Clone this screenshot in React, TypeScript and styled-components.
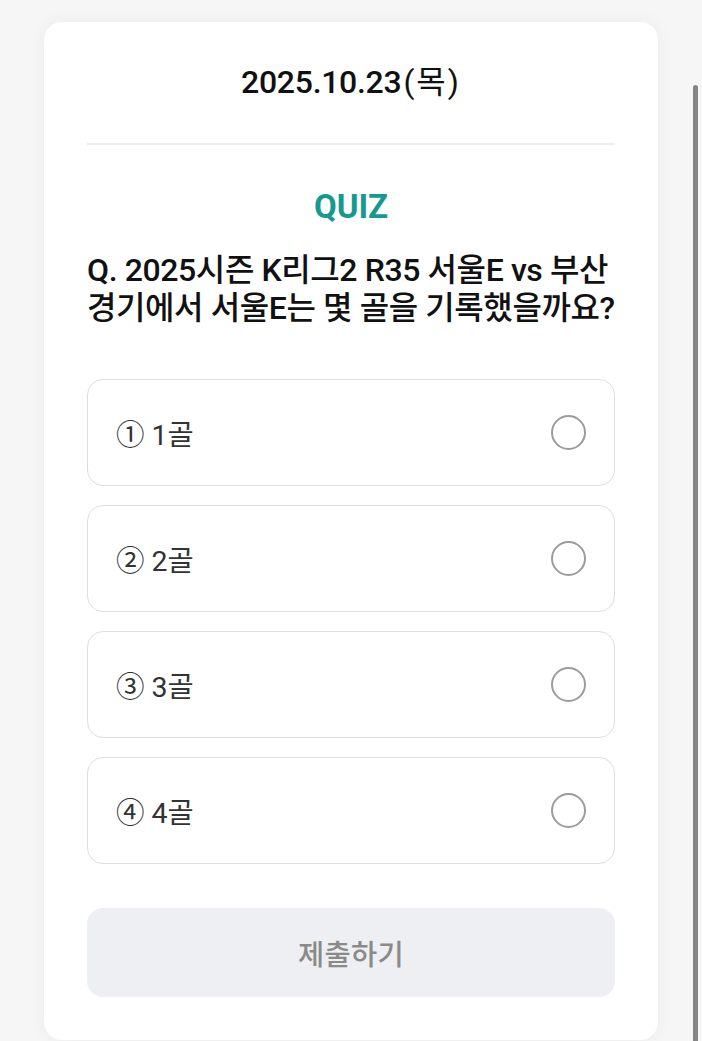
import React, { useState } from "react";
import styled, { createGlobalStyle } from "styled-components";

const Global = createGlobalStyle`
  html, body { margin: 0; padding: 0; background: #f6f6f6; }
  body { font-family: Roboto, "Noto Sans CJK KR", sans-serif; -webkit-font-smoothing: antialiased; }
  * { box-sizing: border-box; }
`;

const Page = styled.div`
  padding: 22px 44px 0;
  min-height: 1041px;
`;

const Card = styled.div`
  background: #ffffff;
  border-radius: 18px;
  box-shadow: 0 0 18px rgba(0, 0, 0, 0.05);
  padding: 44px 43px 43px;
  display: flex;
  flex-direction: column;
`;

const DateTitle = styled.div`
  text-align: center;
  font-size: 32px;
  line-height: 32px;
  font-weight: 500;
  color: #111;
  letter-spacing: -0.3px;
`;

const Paren = styled.span`
  font-weight: 400;
  margin-left: 2px;
  letter-spacing: 2px;
`;

const Divider = styled.hr`
  border: none;
  height: 2px;
  background: #ececec;
  margin: 45px 0 0;
`;

const QuizLabel = styled.div`
  margin-top: 44px;
  text-align: center;
  font-size: 33px;
  line-height: 36px;
  font-weight: 700;
  color: #169a8f;
`;

const Question = styled.div`
  margin-top: 26px;
  font-size: 32px;
  line-height: 38px;
  font-weight: 500;
  color: #111;
  letter-spacing: -0.4px;
`;

const Options = styled.div`
  margin-top: 52px;
  display: flex;
  flex-direction: column;
  gap: 19px;
`;

const Option = styled.button<{ $selected: boolean }>`
  height: 107px;
  display: flex;
  align-items: center;
  justify-content: space-between;
  padding: 0 28px 0 28px;
  background: #fff;
  border: 1.5px solid ${(p) => (p.$selected ? "#169a8f" : "#dedede")};
  border-radius: 16px;
  font-family: inherit;
  font-size: 28.5px;
  color: #333;
  cursor: pointer;
  text-align: left;
`;

const Radio = styled.span<{ $selected: boolean }>`
  width: 35px;
  height: 35px;
  border-radius: 50%;
  border: 2px solid ${(p) => (p.$selected ? "#169a8f" : "#9c9c9c")};
  display: flex;
  align-items: center;
  justify-content: center;
  &::after {
    content: "";
    width: 17px;
    height: 17px;
    border-radius: 50%;
    background: ${(p) => (p.$selected ? "#169a8f" : "transparent")};
  }
`;

const Submit = styled.button<{ $active: boolean }>`
  margin-top: 44px;
  height: 89px;
  border: none;
  border-radius: 16px;
  background: ${(p) => (p.$active ? "#169a8f" : "#eeeff2")};
  color: ${(p) => (p.$active ? "#fff" : "#8a8a8a")};
  font-family: inherit;
  font-size: 28.5px;
  font-weight: 500;
  letter-spacing: 0.3px;
`;

const ScrollThumb = styled.div`
  position: fixed;
  right: 4px;
  top: 85px;
  bottom: 0;
  width: 5px;
  border-radius: 3px 3px 0 0;
  background: #858585;
`;

const options = ["① 1골", "② 2골", "③ 3골", "④ 4골"];

export default function App() {
  const [sel, setSel] = useState<number | null>(null);
  return (
    <>
      <Global />
      <Page>
        <Card>
          <DateTitle>
            2025.10.23<Paren>(목)</Paren>
          </DateTitle>
          <Divider />
          <QuizLabel>QUIZ</QuizLabel>
          <Question>
            Q. 2025시즌 K리그2 R35 서울E vs 부산
            <br />
            경기에서 서울E는 몇 골을 기록했을까요?
          </Question>
          <Options>
            {options.map((o, i) => (
              <Option key={o} $selected={sel === i} onClick={() => setSel(i)}>
                <span>{o}</span>
                <Radio $selected={sel === i} />
              </Option>
            ))}
          </Options>
          <Submit $active={sel !== null}>제출하기</Submit>
        </Card>
      </Page>
      <ScrollThumb />
    </>
  );
}
